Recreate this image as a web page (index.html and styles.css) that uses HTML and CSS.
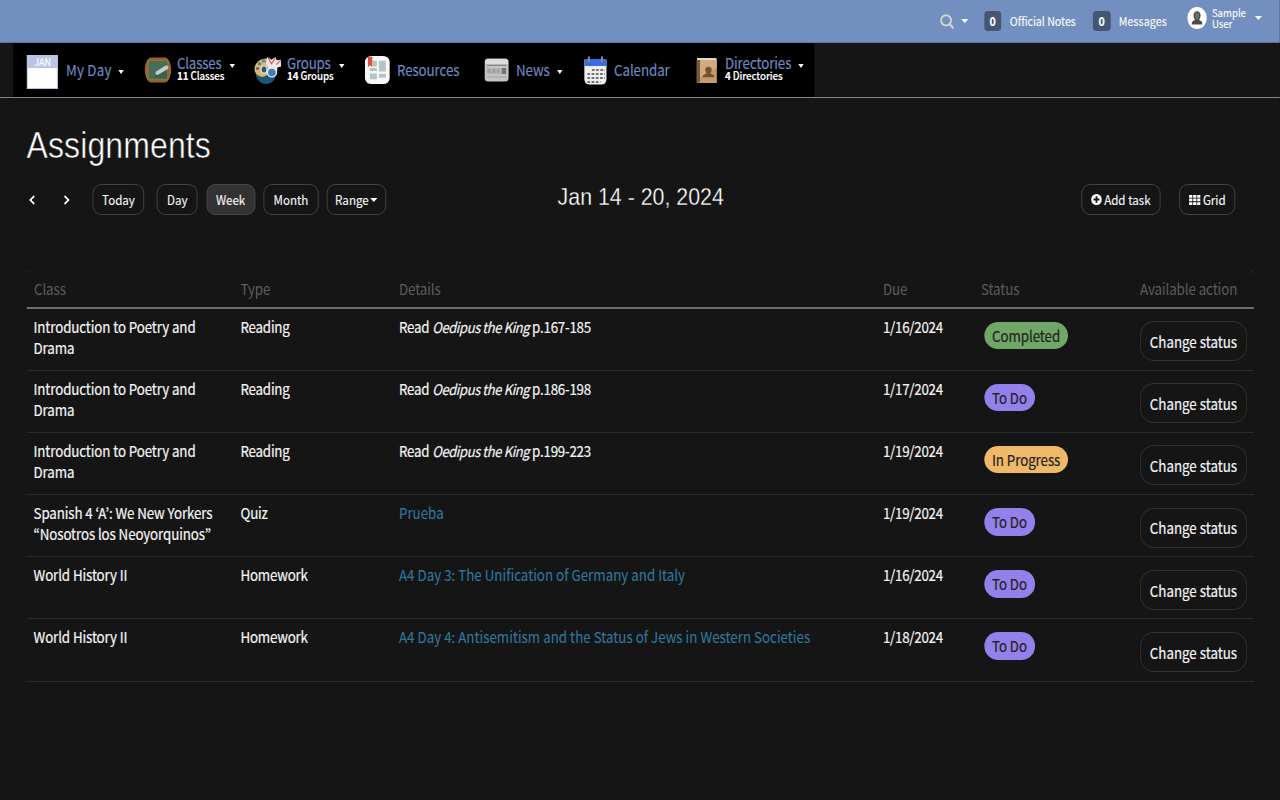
FILE: index.html
```html
<!DOCTYPE html>
<html lang="en">
<head>
<meta charset="utf-8">
<title>Assignments</title>
<link rel="stylesheet" href="styles.css">
</head>
<body>
<div class="viewport">
<div class="page">
  <header class="topbar">
    <div class="search">
      <svg width="17" height="15" viewBox="0 0 17 15" preserveAspectRatio="none"><ellipse cx="7" cy="6.3" rx="5.6" ry="5.1" fill="none" stroke="#d3d8cf" stroke-width="2"/><path d="M11.2 10.2l4 4" stroke="#d3d8cf" stroke-width="2.3"/></svg>
      <i class="caret"></i>
    </div>
    <div class="counter notes"><span class="badge">0</span><span>Official Notes</span></div>
    <div class="counter messages"><span class="badge">0</span><span>Messages</span></div>
    <div class="user">
      <svg width="22" height="22" viewBox="0 0 22 22" preserveAspectRatio="none"><circle cx="11" cy="11" r="11" fill="#fff"/><path d="M5 17.6c0-3 1-3.8 3.8-4.7-1-1.200-1.800-2.700-1.800-4.600C7 6 8.600 4.300 11 4.300s4 1.700 4 4c0 1.900-.8 3.400-1.800 4.600 2.800.9 3.800 1.700 3.800 4.700z" fill="#4a4a4c"/><path d="M8.500 8.500c0-2 1-3 2.500-3s2.500 1 2.500 3-1 4-2.500 4-2.500-2-2.500-4z" fill="#6c6c6e"/></svg>
      <span class="user-name">Sample<br>User</span>
      <i class="caret"></i>
    </div>
  </header>

  <div class="navrow">
    <nav class="nav">
      <a class="item my-day"><span class="icon"><svg width="35" height="34" viewBox="0 0 31 34" preserveAspectRatio="none"><path d="M0 0h31v34H0z" fill="#fff"/><path d="M0 0h31v13H0z" fill="#b9c6e2"/><path d="M.5.5h30v33H.500z" fill="none" stroke="#b9c6e2"/></svg><span class="month">JAN</span></span><span class="label">My Day</span><i class="caret"></i></a>
      <a class="item classes two"><span class="icon"><svg width="31" height="26" viewBox="0 0 28 27" preserveAspectRatio="none"><path d="M6 .5h16q5 3 5.500 13-.5 10-5.500 13H6Q1 23.500.5 13.500 1 3.500 6 .5z" fill="#94652a"/><path d="M4 4h20v19H4z" fill="#38614f" stroke="#a67a3b" stroke-width="1"/><path d="M5 5h18v3L9 22H5z" fill="#4c7462" opacity=".6"/><path d="M13.500 16.500l9-5.500" stroke="#c5cbc5" stroke-width="4.200" stroke-linecap="round"/></svg></span><span class="label"><span>Classes</span><small><b>11</b> Classes</small></span><i class="caret"></i></a>
      <a class="item groups two"><span class="icon"><svg width="31" height="28" viewBox="0 0 28 29" preserveAspectRatio="none"><path d="M2 17l11 1 10-2c0 8-4 12.500-10 13C7 29 2 24 2 17z" fill="#1f5579"/><path d="M1 15C0 8 6 2 14 2.500c5 .5 8 4 8 8 0 4-3 4-5 5-2 2-3 5-7 6-4 0-8-2-9-6.500z" fill="#dfb66d"/><circle cx="6" cy="8" r="1.700" fill="#3a9a59"/><circle cx="10" cy="5" r="1.700" fill="#398cc0"/><circle cx="4" cy="13" r="1.600" fill="#7b4c8d"/><circle cx="13" cy="6" r="1.600" fill="#e75b43"/><path d="M14 1l4 3 4-3 1.500 3.500L27.500 4 28 11l-4 1v4h-9v-5l-3-3z" fill="#eee9e7"/><path d="M15 2l3 6 4-6m5 3l-4 4" stroke="#d4625a" stroke-width="1.200" fill="none"/><ellipse cx="10.500" cy="14" rx="3" ry="3.800" fill="#28577a" stroke="#d8dcdb" stroke-width="1.300"/><circle cx="18.500" cy="17" r="4.600" fill="#3f80b2" stroke="#dfe6ee" stroke-width="1.500"/></svg></span><span class="label"><span>Groups</span><small><b>14</b> Groups</small></span><i class="caret"></i></a>
      <a class="item resources"><span class="icon"><svg width="28" height="28" viewBox="0 0 25 29" preserveAspectRatio="none"><rect width="25" height="29" rx="6.500" fill="#f8f8f6"/><path d="M5 12.500h7v3H5zM14 5h7v11h-7zM5 18h7v6H5zM14 18.500h7v4h-7zM8 5h4v6H8z" fill="#b4c3c8"/><path d="M3 .7h4.500v11L5.200 9.500 3 11.700z" fill="#db5140"/></svg></span><span class="label">Resources</span></a>
      <a class="item news"><span class="icon"><svg width="28" height="24" viewBox="0 0 25 24" preserveAspectRatio="none"><rect x=".5" y=".5" width="24" height="23" rx="3.500" fill="#c3c3c3"/><path d="M1 6V4q0-3 3-3h17q3 0 3 3v2z" fill="#dddddc"/><path d="M3 7.300h19" stroke="#777" stroke-width="1"/><path d="M3 10.500h13v5H3zM3 18.500h19v1H3z" fill="#a3a3a3"/><path d="M17.500 10H22v6h-4.500z" fill="#757575"/><path d="M7.300 10v6M12 10v6" stroke="#c3c3c3" stroke-width=".7"/></svg></span><span class="label">News</span><i class="caret"></i></a>
      <a class="item calendar"><span class="icon"><svg width="26" height="29" viewBox="0 0 23 29" preserveAspectRatio="none"><path d="M.5 4h22v19q0 5.500-5.500 5.500H6Q.5 28.500.5 23z" fill="#efefef"/><path d="M.5 3h22v7H.5z" fill="#386ddd"/><path d="M8 14h13M3.500 18h17.500M3.500 22h17.500M3.500 26h13" stroke="#727477" stroke-width="2.200" stroke-dasharray="2.700 1.500"/><path d="M5 .5V6M18 .5V6" stroke="#8b8d91" stroke-width="2"/></svg></span><span class="label">Calendar</span></a>
      <a class="item directories two"><span class="icon"><svg width="24" height="25" viewBox="0 0 21 26" preserveAspectRatio="none"><path d="M1 1q0-1 2-1h16l1.500 1.500V26H1z" fill="#c69b6a"/><path d="M1 0h19v2.300H1z" fill="#ddd9d1"/><path d="M.5 2H4v23.500H.5z" fill="#75583d"/><path d="M4 2.500h16.500V10L4 20z" fill="#d8b487" opacity=".65"/><path d="M6.500 20c0-2.500 1-3 4-4-2-3-2-7 1.800-7s3.800 4 1.800 7c3 1 4 1.500 4 4z" fill="#735331"/></svg></span><span class="label"><span>Directories</span><small><b>4</b> Directories</small></span><i class="caret"></i></a>
    </nav>
  </div>

  <main class="content">
    <h1>Assignments</h1>
    <div class="toolbar">
      <span class="arrows">
        <svg width="8" height="10" viewBox="0 0 8 10"><path d="M6.500 1L2 5l4.500 4" /></svg>
        <svg width="8" height="10" viewBox="0 0 8 10"><path d="M1.500 1L6 5 1.500 9" /></svg>
      </span>
      <button class="btn today">Today</button>
      <div class="views">
        <button class="btn day">Day</button>
        <button class="btn week active">Week</button>
        <button class="btn month-view">Month</button>
        <button class="btn range">Range<i class="caret"></i></button>
      </div>
      <h2>Jan 14 - 20, 2024</h2>
      <button class="btn add"><svg width="12" height="11" viewBox="0 0 12 11" preserveAspectRatio="none"><ellipse cx="6" cy="5.500" rx="6" ry="5.500" fill="#fff"/><path d="M6 2.300v6.400M2.700 5.500h6.600" stroke="#151515" stroke-width="2"/></svg><span>Add task</span></button>
      <button class="btn grid-btn"><svg width="13" height="10" viewBox="0 0 13 10" fill="#fff"><path d="M0 0h3.700v2.700H0zM4.600 0h3.700v2.700H4.600zM9.200 0h3.700v2.700H9.200zM0 3.600h3.700v2.700H0zM4.600 3.600h3.700v2.700H4.600zM9.200 3.600h3.700v2.700H9.200zM0 7.200h3.700v2.700H0zM4.600 7.200h3.700v2.700H4.600zM9.200 7.200h3.700v2.700H9.200z"/></svg><span>Grid</span></button>
    </div>

    <section class="assignments">
      <div class="row head"><span>Class</span><span>Type</span><span>Details</span><span>Due</span><span>Status</span><span>Available action</span></div>
      <div class="row"><span class="course">Introduction to Poetry and<br>Drama</span><span class="type">Reading</span><span class="reading">Read <em>Oedipus the King</em> p.167-185</span><span class="due">1/16/2024</span><span><b class="pill done">Completed</b></span><button class="change">Change status</button></div>
      <div class="row"><span class="course">Introduction to Poetry and<br>Drama</span><span class="type">Reading</span><span class="reading">Read <em>Oedipus the King</em> p.186-198</span><span class="due">1/17/2024</span><span><b class="pill todo">To Do</b></span><button class="change">Change status</button></div>
      <div class="row"><span class="course">Introduction to Poetry and<br>Drama</span><span class="type">Reading</span><span class="reading">Read <em>Oedipus the King</em> p.199-223</span><span class="due">1/19/2024</span><span><b class="pill progress">In Progress</b></span><button class="change">Change status</button></div>
      <div class="row"><span class="course">Spanish 4 ‘A’: We New Yorkers<br>“Nosotros los Neoyorquinos”</span><span class="type">Quiz</span><span><a>Prueba</a></span><span class="due">1/19/2024</span><span><b class="pill todo">To Do</b></span><button class="change">Change status</button></div>
      <div class="row"><span class="course">World History II</span><span class="type">Homework</span><span><a>A4 Day 3: The Unification of Germany and Italy</a></span><span class="due">1/16/2024</span><span><b class="pill todo">To Do</b></span><button class="change">Change status</button></div>
      <div class="row"><span class="course">World History II</span><span class="type">Homework</span><span><a>A4 Day 4: Antisemitism and the Status of Jews in Western Societies</a></span><span class="due">1/18/2024</span><span><b class="pill todo">To Do</b></span><button class="change">Change status</button></div>
    </section>
  </main>
</div>
</div>
</body>
</html>
```

FILE: styles.css
```css
* { box-sizing: border-box; }
html, body { margin: 0; background: #151515; }
.viewport { width: 1280px; height: 800px; overflow: hidden; contain: paint; }
/* Condensed presentation: laid out wide, narrowed to the window */
.page {
  width: 1438.2px;
  height: 800px;
  transform: scaleX(.89);
  transform-origin: 0 0;
  background: #151515;
  color: #f4f4f4;
  font: 15px/21.3px "Noto Sans CJK KR", "Noto Sans", sans-serif;
}
svg { display: block; flex: none; }
button { margin: 0; font: inherit; color: inherit; background: none; padding: 0; }
.caret { flex: none; border: 4px solid transparent; border-top: 4px solid #fff; border-bottom: 0; }

.topbar { height: 43px; background: #738fbf; border-bottom: 1px solid #5c769f; display: flex; padding-left: 1056px; font-size: 12px; color: #f8fafd; -webkit-text-stroke: .15px; }
.search { width: 49.600px; display: flex; align-items: center; gap: 7px; }
.counter { display: flex; align-items: center; gap: 9.500px; }
.notes { width: 122.400px; letter-spacing: -.04px; }
.messages { width: 105.700px; letter-spacing: .08px; }
.badge { width: 19.600px; height: 20px; border-radius: 4px; background: #455673; color: #fff; font-weight: 700; line-height: 20px; text-align: center; }
.user { display: flex; height: 35px; align-items: center; gap: 6px; }
.user-name { width: 42px; line-height: 11.500px; font-size: 10.800px; padding-top: 1px; }

.navrow { height: 55px; padding-left: 14.600px; border-bottom: 1px solid #8b8480; }
.nav { width: 900px; height: 54px; background: #000; display: flex; padding-left: 15.700px; }
.item { display: flex; align-items: center; color: #6c8ac2; font-size: 15px; line-height: 17px; -webkit-text-stroke: .15px; }
.icon { flex: none; position: relative; }
.month { position: absolute; left: 0; top: 0; width: 35px; font-size: 10px; line-height: 14px; color: #fff; text-align: center; }
.item .caret { margin-left: 8px; margin-top: 3px; border-width: 4px 3.800px 0; }
.two .caret { margin-left: 6px; margin-top: -8px; }
.label { margin-top: -2px; letter-spacing: -.1px; }
.label span { display: block; line-height: 13px; }
.label small { display: block; font-size: 11px; line-height: 12px; color: #fff; font-weight: 500; }
.label small b { font-weight: 700; }
.two .label { margin-top: -4px; }
.my-day { width: 131.500px; } .my-day .icon { width: 43.900px; padding-top: 3px; } .my-day .month { top: 3px; }
.my-day .label { letter-spacing: .2px; }
.classes { width: 123.600px; } .classes .icon { width: 37.100px; }
.classes .label span, .groups .label span { letter-spacing: -.25px; }
.groups { width: 124.700px; } .groups .icon { width: 37.100px; }
.resources { width: 134.300px; } .resources .icon { width: 35.900px; }
.news { width: 111.600px; } .news .icon { width: 35.400px; }
.calendar { width: 126px; } .calendar .icon { width: 34px; }
.directories .icon { width: 32.600px; }
.directories .caret { margin-left: 8px; }

.content { padding: 27px 29.200px 0 29.800px; }
h1 { margin: 0; font: 400 36px/42px "Liberation Sans", Arial, sans-serif; letter-spacing: .1px; color: #fff; -webkit-text-stroke: .55px #151515; }
.toolbar { display: flex; align-items: flex-start; margin-top: 17px; height: 87px; font-size: 13px; -webkit-text-stroke: .15px; }
.arrows { display: flex; align-items: center; height: 31px; width: 74.700px; padding-left: 2px; gap: 31px; fill: none; stroke: #fff; stroke-width: 1.700; }
.btn { height: 31px; border: 1px solid #434343; border-radius: 10px / 9px; display: flex; align-items: center; justify-content: center; line-height: 20px; }
.btn.active { background: #333; border-color: #484848; }
.views { display: flex; gap: 9.700px; margin-left: 14.600px; }
.today { width: 57.300px; }
.day { width: 45.500px; }
.week { width: 55px; }
.month-view { width: 61.300px; }
.range { width: 66.300px; gap: 2px; }
h2 { margin: 0 0 0 193px; width: 588px; font: 400 24px/26px "Liberation Sans", Arial, sans-serif; color: #fff; -webkit-text-stroke: .3px #151515; }
.add { width: 89.300px; gap: 3px; }
.grid-btn { width: 63.500px; gap: 3px; margin-left: 20.800px; }

.row { display: grid; grid-template-columns: 232px 178.100px 543.800px 110.100px 178.700px 128px; height: 62.200px; padding-left: 8.400px; padding-top: 7px; border-bottom: 1px solid #2b2b2b; align-items: start; position: relative; -webkit-text-stroke: .2px; }
.head { height: 37.500px; border-bottom: 2px solid #6c6c6c; color: #5d5d5d; -webkit-text-stroke: 0; letter-spacing: -.1px; }
.head::before, .head::after { content: ""; position: absolute; top: 0; width: 4px; height: 4px; border-top: 1px solid #303030; }
.head::before { left: 0; border-radius: 4px 0 0; }
.head::after { right: 0; border-radius: 0 4px 0 0; }
.row a { color: #2f779f; -webkit-text-stroke: .1px; }
.course { margin-left: -.5px; letter-spacing: -.13px; }
.type { letter-spacing: -.25px; }
.reading { letter-spacing: -.25px; }
.reading em { font-size: 14.500px; letter-spacing: -.4px; }
.due { letter-spacing: -.3px; }
.pill { display: inline-block; margin: 6px 0 0 3.400px; height: 27.500px; padding: 0 9px; border-radius: 15.500px / 13.750px; line-height: 27.500px; font-weight: 400; letter-spacing: -.08px; color: #222; }
.done { background: #70a767; }
.todo { background: #9480eb; }
.progress { background: #f0b969; }
.change { width: 120.200px; height: 40px; margin-top: 5.500px; border: 1px solid #303030; border-radius: 16px / 14px; padding-top: 1px; }
```
